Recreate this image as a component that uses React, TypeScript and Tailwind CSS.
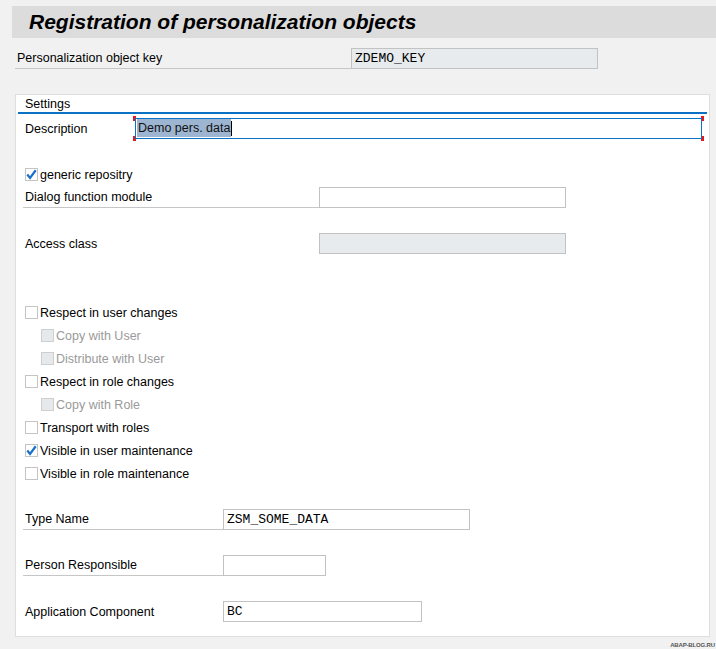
import React from 'react';

const mono = { fontFamily: '"Liberation Mono", "Courier New", monospace' };

const Check: React.FC<{ checked?: boolean; disabled?: boolean }> = ({ checked, disabled }) => (
  <span
    className={`w-[13px] h-[13px] border flex items-center justify-center shrink-0 ${
      disabled ? 'bg-[#e6e9ec] border-[#cfcfcf]' : 'bg-white border-[#c4c4c4]'
    }`}
  >
    {checked && (
      <svg width="13" height="13" viewBox="0 0 13 13">
        <path d="M1.5 6.5 L4.8 10.5 L11.5 1.5" fill="none" stroke="#1a6fc9" strokeWidth="2.6" />
      </svg>
    )}
  </span>
);

interface FieldProps {
  label: string;
  labelWidth: string;
  inputWidth: string;
  value?: string;
  disabled?: boolean;
  underline?: boolean;
}

const Field: React.FC<FieldProps> = ({ label, labelWidth, inputWidth, value, disabled, underline }) => (
  <div className="h-[23px] flex items-start pt-px">
    <div
      className={`${labelWidth} h-[21px] pl-[2px] pt-[2px] flex items-center ${underline ? 'border-b border-[#c6c6c6]' : ''}`}
    >
      {label}
    </div>
    <div
      className={`${inputWidth} h-[21px] border border-[#c2c2c2] px-[3px] pt-px flex items-center text-[13px] ${
        disabled ? 'bg-[#e8ebee]' : 'bg-white'
      }`}
      style={mono}
    >
      {value}
    </div>
  </div>
);

const CheckRow: React.FC<{ label: string; checked?: boolean; disabled?: boolean; indent?: boolean }> = ({
  label,
  checked,
  disabled,
  indent,
}) => (
  <div className={`h-[23px] flex items-center gap-[2px] ${indent ? 'pl-[18px]' : 'pl-[2px]'} ${disabled ? 'text-[#9a9a9a]' : ''}`}>
    <Check checked={checked} disabled={disabled} />
    <span className="pt-[2px]">{label}</span>
  </div>
);

const Blank = () => <div className="h-[23px]" />;

export default function App() {
  return (
    <div
      className="w-[716px] h-[649px] bg-[#f1f1f1] text-[12.5px] text-black overflow-hidden flex flex-col"
      style={{ fontFamily: '"Liberation Sans", Arial, sans-serif' }}
    >
      {/* title bar */}
      <div className="mt-[6px] ml-[12px] h-[33px] bg-[#dcdcdc] flex items-center pl-[17px]">
        <h1 className="text-[21px] font-bold italic text-black">Registration of personalization objects</h1>
      </div>

      {/* key row */}
      <div className="mt-[10px] ml-[15px] flex">
        <div className="w-[336px] h-[21px] pl-[2px] pt-[2px] flex items-center border-b border-[#c6c6c6]">
          Personalization object key
        </div>
        <div
          className="w-[247px] h-[21px] border border-[#c2c2c2] bg-[#e8ebee] px-[3px] pt-px flex items-center text-[13px]"
          style={mono}
        >
          ZDEMO_KEY
        </div>
      </div>

      {/* settings panel */}
      <div className="mt-[25px] ml-[15px] w-[695px] bg-white border border-[#dedede] flex flex-col">
        <div className="h-[17px] pl-[9px] pt-[2px] flex items-center">Settings</div>
        <div className="mx-[2px] h-[2px] bg-[#0a71c4]" />
        <div className="pt-[3px] pb-[13px] pl-[7px] flex flex-col">
          {/* description */}
          <div className="h-[23px] flex items-start pt-px">
            <div className="w-[112px] h-[21px] pl-[2px] pt-[2px] flex items-center">Description</div>
            <div className="relative w-[567px] h-[21px] border border-[#0a71c4] bg-white flex items-center pl-[1px]">
              <span className="bg-[#9db5d1] text-[#111] px-[1px] pt-px leading-[17px]">Demo pers. data</span>
              <span className="w-px h-[15px] bg-black" />
              <span className="absolute -left-[3px] -top-[3px] w-[3px] h-[5px] border-l-2 border-t-2 border-[#e01b1b]" />
              <span className="absolute -left-[3px] -bottom-[3px] w-[3px] h-[5px] border-l-2 border-b-2 border-[#e01b1b]" />
              <span className="absolute -right-[3px] -top-[3px] w-[3px] h-[5px] border-r-2 border-t-2 border-[#e01b1b]" />
              <span className="absolute -right-[3px] -bottom-[3px] w-[3px] h-[5px] border-r-2 border-b-2 border-[#e01b1b]" />
            </div>
          </div>
          <Blank />
          <CheckRow label="generic repositry" checked />
          <Field label="Dialog function module" labelWidth="w-[296px]" inputWidth="w-[247px]" underline />
          <Blank />
          <Field label="Access class" labelWidth="w-[296px]" inputWidth="w-[247px]" disabled />
          <Blank />
          <Blank />
          <CheckRow label="Respect in user changes" />
          <CheckRow label="Copy with User" indent disabled />
          <CheckRow label="Distribute with User" indent disabled />
          <CheckRow label="Respect in role changes" />
          <CheckRow label="Copy with Role" indent disabled />
          <CheckRow label="Transport with roles" />
          <CheckRow label="Visible in user maintenance" checked />
          <CheckRow label="Visible in role maintenance" />
          <Blank />
          <Field label="Type Name" labelWidth="w-[200px]" inputWidth="w-[247px]" value="ZSM_SOME_DATA" underline />
          <Blank />
          <Field label="Person Responsible" labelWidth="w-[200px]" inputWidth="w-[103px]" underline />
          <Blank />
          <Field label="Application Component" labelWidth="w-[200px]" inputWidth="w-[199px]" value="BC" />
        </div>
      </div>

      <div className="mt-[4px] pr-[1px] text-right text-[6px] font-bold text-[#555] tracking-tight">ABAP-BLOG.RU</div>
    </div>
  );
}
